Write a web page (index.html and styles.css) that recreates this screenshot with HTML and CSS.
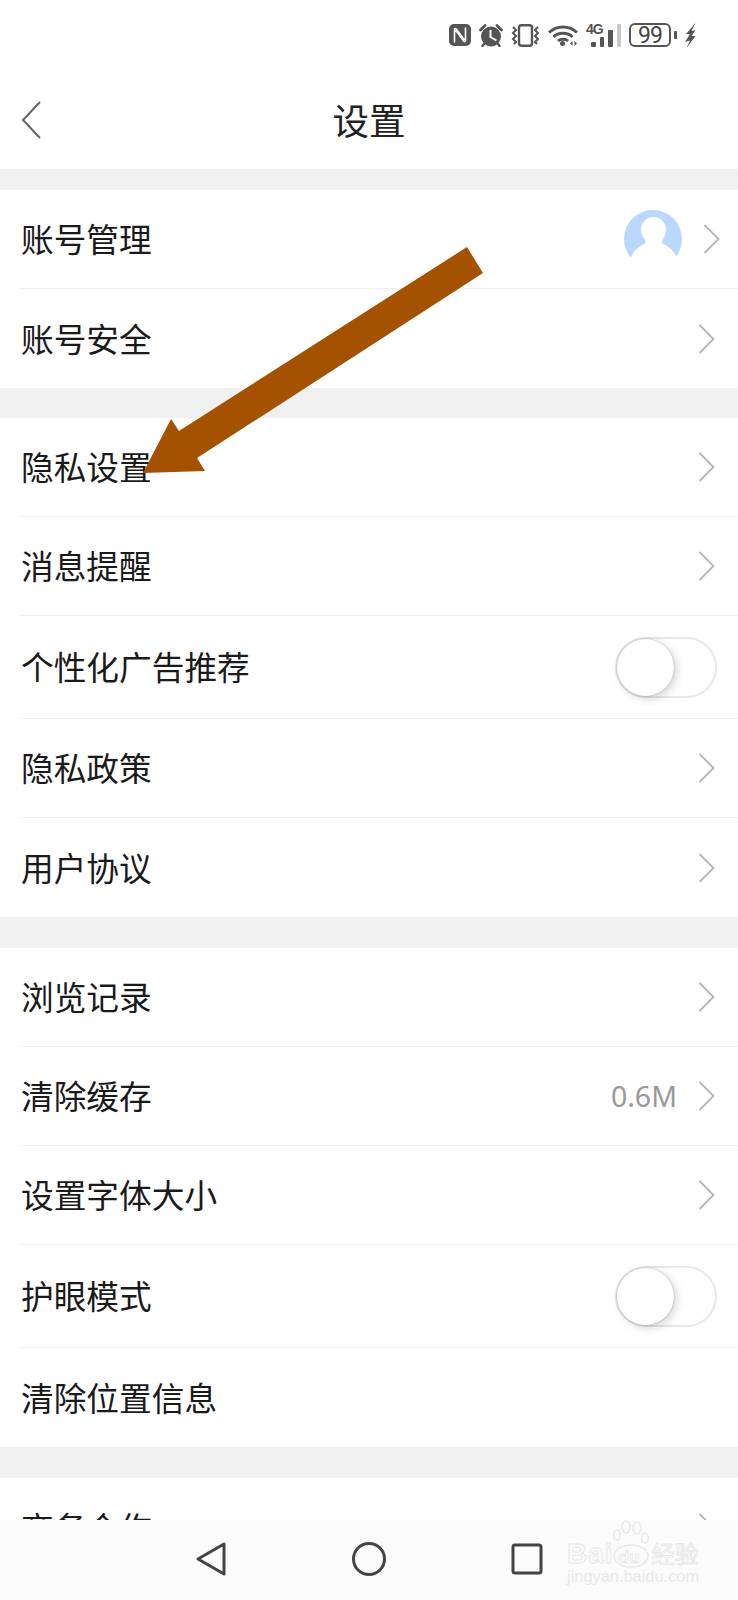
FILE: index.html
```html
<!DOCTYPE html>
<html lang="zh-CN">
  <head>
    <meta charset="UTF-8" />
    <meta name="viewport" content="width=device-width, initial-scale=1.0" />
    <title>设置</title>
    <link rel="stylesheet" href="styles.css">
  </head>
  <body>
    <div class="status-bar">
      <svg class="st-nfc" width="22" height="22" viewBox="0 0 22 22">
        <rect x="0" y="0" width="22" height="22" rx="5" fill="#555"/>
        <path d="M5.500 18.500V5.500c0-1 1-1.200 1.600-.6L15.500 16M16.500 3.500v13c0 1-1 1.200-1.600.6L6.500 6" fill="none" stroke="#fff" stroke-width="1.600"/>
      </svg>
      <svg class="st-alarm" width="24" height="23" viewBox="0 0 24 23">
        <path d="M1.500 6l4.500-4.500M22.500 6L18 1.500" stroke="#555" stroke-width="2.800" stroke-linecap="round"/>
        <circle cx="12" cy="12.500" r="10" fill="#555"/>
        <path d="M5 20l-1.500 2M19 20l1.500 2" stroke="#555" stroke-width="2.400" stroke-linecap="round"/>
        <path d="M11.500 6v7l6 3.500" fill="none" stroke="#fff" stroke-width="2"/>
      </svg>
      <svg class="st-vibrate" width="29" height="23" viewBox="0 0 29 23">
        <rect x="8" y="1.200" width="13" height="20.600" rx="2.500" fill="none" stroke="#555" stroke-width="2.400"/>
        <path d="M2 3l3 3-3 3 3 3-3 3 3 3-2 2M27 3l-3 3 3 3-3 3 3 3-3 3 2 2" fill="none" stroke="#555" stroke-width="2"/>
      </svg>
      <svg class="st-wifi" width="30" height="22" viewBox="0 0 30 22">
        <path d="M1 8.500c7.500-7.500 20.500-7.500 28 0M5.500 13c5-5 14-5 19 0M10 17c2.500-2.500 7.500-2.500 10 0" fill="none" stroke="#555" stroke-width="3"/>
        <circle cx="14.500" cy="19.500" r="2.500" fill="#555"/>
        <path d="M22 19.500l2.500-2.500v5zM29 19.500l-2.500-2.500v5z" fill="#555"/>
      </svg>
      <div class="st-signal">
        <span class="st-4g">4G</span>
        <span class="bar bar1"></span>
        <span class="bar bar2"></span>
        <span class="bar bar3"></span>
        <span class="bar bar4"></span>
      </div>
      <div class="st-battery">
        <span class="battery-body">99</span>
        <span class="battery-nub"></span>
      </div>
      <svg class="st-bolt" width="11" height="25" viewBox="0 0 11 25">
        <path d="M10.500 0L1 11h4L0 19l5-1.500L1.500 25 10.500 13h-4l4-6-4 1z" fill="#555"/>
      </svg>
    </div>

    <header class="top-bar">
      <svg class="back" width="20" height="38" viewBox="0 0 20 38">
        <path d="M19 1L2 19l17 18" fill="none" stroke="#666" stroke-width="2"/>
      </svg>
      <h1>设置</h1>
    </header>

    <main class="list">
      <section class="group first">
        <div class="row">
          <span class="label">账号管理</span>
          <svg class="avatar" width="58" height="58" viewBox="0 0 58 58">
            <circle cx="29" cy="29" r="29" fill="#b9d8fb"/>
            <path d="M29.500 7c7 0 12.500 5.500 12.500 12.500 0 5-2 8-3.500 10.500-1 2-.5 3 1 4 5 2.500 10 6 13 13l6 12H-1l8-12c3-7 8-10.500 13-13 1.500-1 2-2 1-4-1.500-2.500-4-5.500-4-10.500C17 12.500 22.500 7 29.500 7z" fill="#fff"/>
          </svg>
          <svg class="chevron shifted" width="17" height="30" viewBox="0 0 17 30"><path d="M1.500 1L15.500 15 1.500 29" /></svg>
        </div>
        <div class="row">
          <span class="label">账号安全</span>
          <svg class="chevron" width="17" height="30" viewBox="0 0 17 30"><path d="M1.500 1L15.500 15 1.500 29" /></svg>
        </div>
      </section>

      <section class="group">
        <div class="row">
          <span class="label">隐私设置</span>
          <svg class="chevron" width="17" height="30" viewBox="0 0 17 30"><path d="M1.500 1L15.500 15 1.500 29" /></svg>
        </div>
        <div class="row">
          <span class="label">消息提醒</span>
          <svg class="chevron" width="17" height="30" viewBox="0 0 17 30"><path d="M1.500 1L15.500 15 1.500 29" /></svg>
        </div>
        <div class="row tall">
          <span class="label">个性化广告推荐</span>
          <span class="toggle"><span class="knob"></span></span>
        </div>
        <div class="row">
          <span class="label">隐私政策</span>
          <svg class="chevron" width="17" height="30" viewBox="0 0 17 30"><path d="M1.500 1L15.500 15 1.500 29" /></svg>
        </div>
        <div class="row">
          <span class="label">用户协议</span>
          <svg class="chevron" width="17" height="30" viewBox="0 0 17 30"><path d="M1.500 1L15.500 15 1.500 29" /></svg>
        </div>
      </section>

      <section class="group wide-gap">
        <div class="row">
          <span class="label">浏览记录</span>
          <svg class="chevron" width="17" height="30" viewBox="0 0 17 30"><path d="M1.500 1L15.500 15 1.500 29" /></svg>
        </div>
        <div class="row">
          <span class="label">清除缓存</span>
          <span class="value">0.6M</span>
          <svg class="chevron" width="17" height="30" viewBox="0 0 17 30"><path d="M1.500 1L15.500 15 1.500 29" /></svg>
        </div>
        <div class="row">
          <span class="label">设置字体大小</span>
          <svg class="chevron" width="17" height="30" viewBox="0 0 17 30"><path d="M1.500 1L15.500 15 1.500 29" /></svg>
        </div>
        <div class="row tall">
          <span class="label">护眼模式</span>
          <span class="toggle"><span class="knob"></span></span>
        </div>
        <div class="row">
          <span class="label">清除位置信息</span>
        </div>
      </section>

      <section class="group wide-gap">
        <div class="row">
          <span class="label">商务合作</span>
          <svg class="chevron" width="17" height="30" viewBox="0 0 17 30"><path d="M1.500 1L15.500 15 1.500 29" /></svg>
        </div>
      </section>
    </main>

    <nav class="nav-bar">
      <svg width="32" height="36" viewBox="0 0 32 36">
        <path d="M29 3v30L3 18z" fill="none" stroke="#444" stroke-width="3" stroke-linejoin="round"/>
      </svg>
      <svg width="36" height="36" viewBox="0 0 36 36">
        <circle cx="18" cy="18" r="15.500" fill="none" stroke="#444" stroke-width="3"/>
      </svg>
      <svg width="32" height="34" viewBox="0 0 32 34">
        <rect x="2" y="3" width="28" height="28" rx="2" fill="none" stroke="#444" stroke-width="3"/>
      </svg>
    </nav>

    <svg class="arrow" width="342" height="228" viewBox="143 247 342 228">
      <path d="M467 247L483 273 197 458 205 471 143 473 171 419 179 431z" fill="#a45100"/>
    </svg>

    <div class="watermark">
      <svg class="paw" width="36" height="48" viewBox="0 0 36 48">
        <g fill="none" stroke="#e9e9e9" stroke-width="1.500">
          <ellipse cx="4" cy="15" rx="3.200" ry="5"/>
          <ellipse cx="13" cy="7" rx="4" ry="6"/>
          <ellipse cx="24" cy="8" rx="4" ry="6"/>
          <ellipse cx="32" cy="18" rx="3.200" ry="5"/>
          <ellipse cx="18" cy="36" rx="17" ry="11"/>
        </g>
      </svg>
      <div class="wm-logo">
        <span class="wm-bai">Bai</span>
        <span class="wm-du">du</span>
        <span class="wm-cn">经验</span>
      </div>
      <div class="wm-url">jingyan.baidu.com</div>
    </div>
  </body>
</html>
```

FILE: styles.css
```css
html,
body {
  margin: 0;
  padding: 0;
}

body {
  position: relative;
  width: 738px;
  height: 1600px;
  display: flex;
  flex-direction: column;
  overflow: hidden;
  background-color: #ffffff;
  color: #1a1a1a;
  font-family: "Noto Sans CJK SC", "Noto Sans", sans-serif;
}

/* status bar */
.status-bar {
  height: 70px;
  flex: none;
  display: flex;
  align-items: center;
  justify-content: flex-end;
  gap: 8px;
  padding-right: 42px;
  box-sizing: border-box;
}

.st-signal {
  position: relative;
  width: 35px;
  height: 23px;
  display: flex;
  align-items: flex-end;
  justify-content: flex-end;
  gap: 4px;
}

.st-4g {
  position: absolute;
  left: 0;
  top: -2px;
  font-family: "Liberation Sans", sans-serif;
  font-size: 14px;
  font-weight: bold;
  letter-spacing: -1px;
  line-height: 14px;
  color: #555;
}

.bar {
  width: 4.500px;
  background-color: #555;
  border-radius: 1px;
}

.bar1 { height: 5px; }
.bar2 { height: 10px; }
.bar3 { height: 17px; }
.bar4 { height: 23px; background-color: #c8c8c8; }

.st-battery {
  display: flex;
  align-items: center;
  gap: 3px;
}

.battery-body {
  width: 42px;
  height: 24px;
  box-sizing: border-box;
  border: 2px solid #555;
  border-radius: 6px;
  font-family: "Roboto", sans-serif;
  font-size: 23px;
  letter-spacing: -1px;
  line-height: 21px;
  text-align: center;
  color: #444;
}

.battery-nub {
  width: 3px;
  height: 8px;
  background-color: #555;
  border-radius: 1px;
}

/* title */
.top-bar {
  height: 99px;
  flex: none;
  box-sizing: border-box;
  display: flex;
  align-items: center;
  justify-content: center;
  position: relative;
}

.top-bar h1 {
  margin: 0;
  font-size: 36.500px;
  font-weight: 400;
  line-height: 50px;
  color: #222;
}

.back {
  position: absolute;
  left: 21px;
  top: 31px;
}

/* list */
.list {
  flex: 1;
  min-height: 0;
  overflow: hidden;
  background-color: #f0f0f0;
}

.group {
  background-color: #ffffff;
  margin-top: 30px;
}

.group.first {
  margin-top: 21px;
}

.group.wide-gap {
  margin-top: 31px;
}

.row {
  height: 99px;
  margin-left: 21px;
  padding-right: 23px;
  box-sizing: border-box;
  display: flex;
  align-items: center;
  border-bottom: 1px solid #f0f0f0;
}

.row:last-child {
  border-bottom: none;
}

.row.tall {
  height: 103px;
  padding-right: 21px;
}

.label {
  flex: 1;
  font-size: 32.700px;
  line-height: 46px;
  padding-bottom: 2px;
}

.value {
  margin-right: 21px;
  font-family: "Noto Sans", sans-serif;
  font-size: 28.500px;
  color: #999999;
}

.avatar {
  margin-right: 21.500px;
}

.chevron path {
  fill: none;
  stroke: #b6b6b6;
  stroke-width: 1.800;
}

.chevron.shifted {
  margin-right: -5px;
}

.toggle {
  width: 102px;
  height: 61px;
  box-sizing: border-box;
  border: 2px solid #e8e8e8;
  border-radius: 31px;
  display: block;
}

.knob {
  display: block;
  width: 57px;
  height: 57px;
  border-radius: 50%;
  background-color: #ffffff;
  box-shadow: 0 0 2px rgba(0, 0, 0, 0.3), 3px 3px 10px rgba(0, 0, 0, 0.16);
}

/* bottom nav */
.nav-bar {
  height: 80px;
  flex: none;
  background-color: #fbfbfb;
  display: flex;
  align-items: center;
  justify-content: center;
  gap: 124px;
  box-sizing: border-box;
  padding-bottom: 2px;
}

/* annotation arrow, lies over the list */
.arrow {
  position: absolute;
  left: 143px;
  top: 247px;
}

/* watermark, lies over the nav bar */
.watermark {
  position: absolute;
  left: 567px;
  top: 1518px;
  width: 132px;
  color: #e9e9e9;
}

.paw {
  position: absolute;
  left: 46px;
  top: 2px;
}

.wm-logo {
  margin-top: 22px;
  display: flex;
  align-items: baseline;
  height: 26px;
  line-height: 26px;
  white-space: nowrap;
  color: #fbfbfb;
  -webkit-text-stroke: 1px #e9e9e9;
}

.wm-bai {
  font-family: "Liberation Sans", sans-serif;
  font-size: 28px;
  font-weight: bold;
  letter-spacing: 1px;
}

.wm-du {
  font-family: "Liberation Sans", sans-serif;
  font-size: 17px;
  font-weight: bold;
  margin-left: 5px;
}

.wm-cn {
  font-size: 23.500px;
  margin-left: 12px;
}

.wm-url {
  font-family: "Liberation Sans", sans-serif;
  font-size: 16.400px;
  line-height: 20px;
  white-space: nowrap;
}
```
